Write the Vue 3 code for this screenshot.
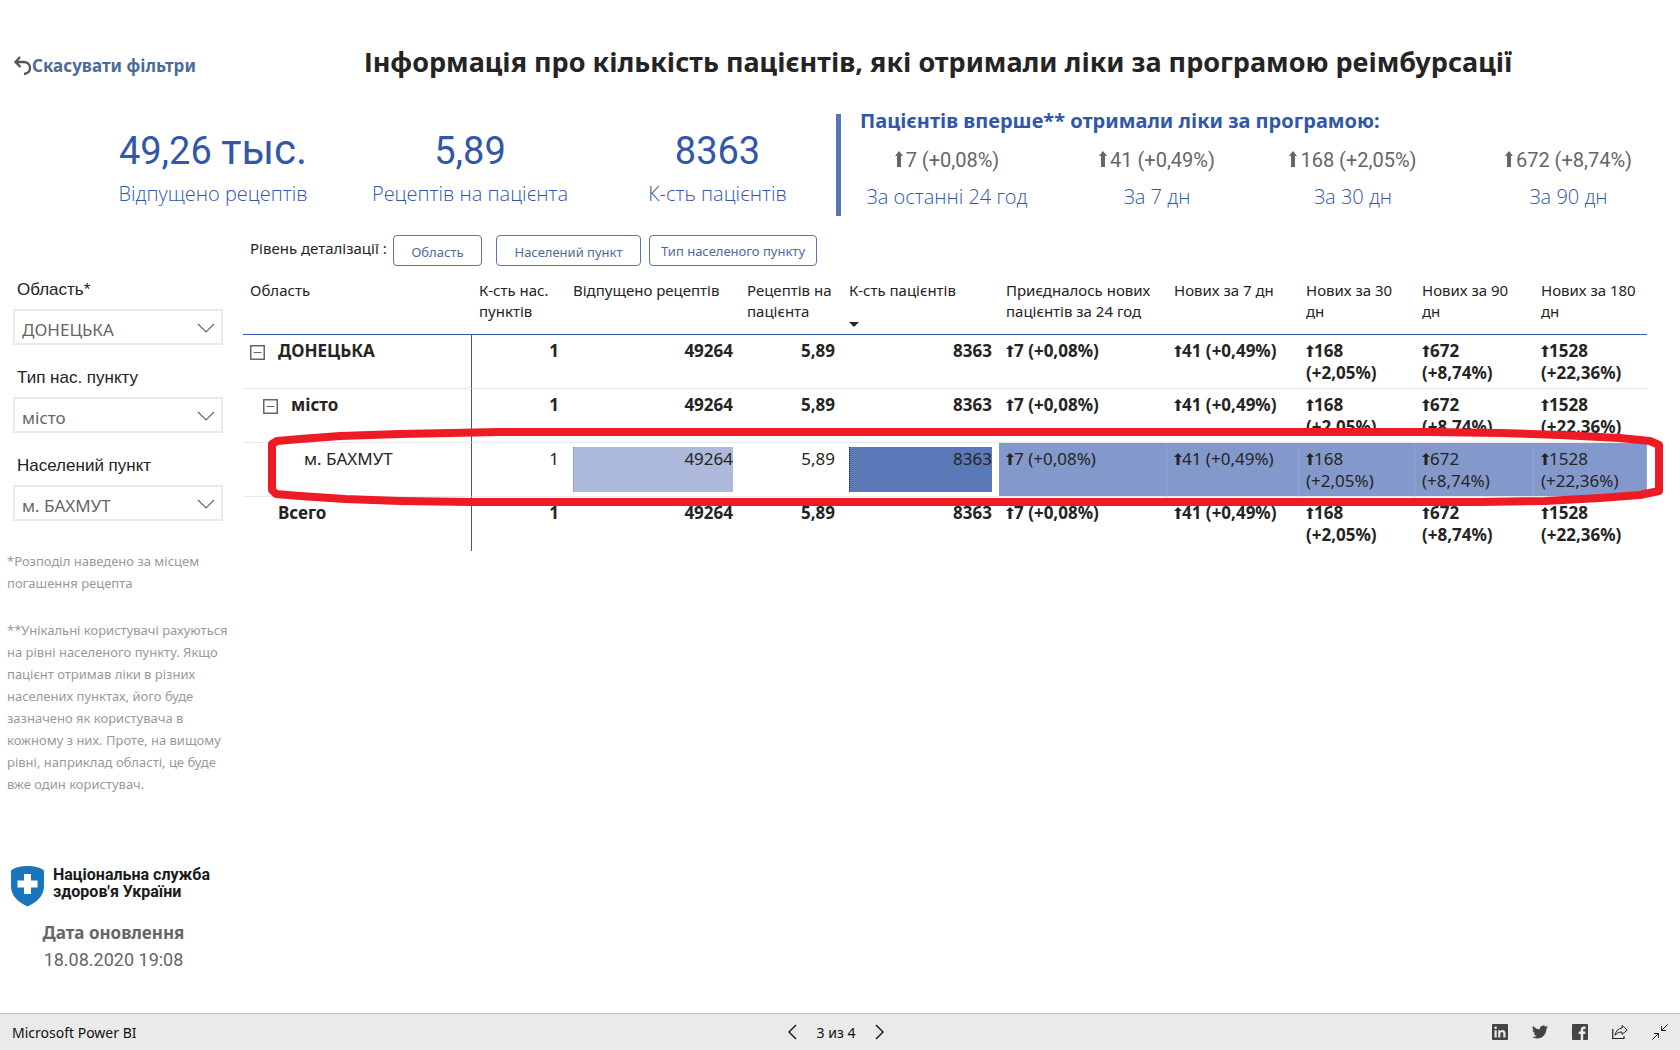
<script setup>
import { ref } from 'vue'

const totals = [
  { value: '49,26', unit: 'тыс.', label: 'Відпущено рецептів' },
  { value: '5,89', label: 'Рецептів на пацієнта' },
  { value: '8363', label: 'К-сть пацієнтів' },
]

const growth = [
  { value: '7 (+0,08%)', label: 'За останні 24 год' },
  { value: '41 (+0,49%)', label: 'За 7 дн' },
  { value: '168 (+2,05%)', label: 'За 30 дн' },
  { value: '672 (+8,74%)', label: 'За 90 дн' },
]

const filters = ref([
  { id: 'region', label: 'Область*', value: 'ДОНЕЦЬКА' },
  { id: 'kind', label: 'Тип нас. пункту', value: 'місто' },
  { id: 'place', label: 'Населений пункт', value: 'м. БАХМУТ' },
])

const columns = [
  { key: 'name', title: 'Область' },
  { key: 'places', title: 'К-сть нас. пунктів' },
  { key: 'issued', title: 'Відпущено рецептів' },
  { key: 'ratio', title: 'Рецептів на пацієнта' },
  { key: 'patients', title: 'К-сть пацієнтів', sorted: true },
  { key: 'day', title: 'Приєдналось нових пацієнтів за 24 год' },
  { key: 'week', title: 'Нових за 7 дн' },
  { key: 'month', title: 'Нових за 30 дн' },
  { key: 'quarter', title: 'Нових за 90 дн' },
  { key: 'half', title: 'Нових за 180 дн' },
]

const rows = [
  { name: 'ДОНЕЦЬКА', level: 'top', toggle: true },
  { name: 'місто', level: 'mid', toggle: true },
  { name: 'м. БАХМУТ', level: 'leaf' },
  { name: 'Всего', level: 'sum' },
]

const trends = ['7 (+0,08%)', '41 (+0,49%)', '168 (+2,05%)', '672 (+8,74%)', '1528 (+22,36%)']
</script>

<template>
  <div class="report">
    <main class="canvas">
      <header class="head">
        <button class="reset" type="button">
          <svg width="18" height="20" viewBox="0 0 18 20" aria-hidden="true">
            <path d="M6 1 1.500 6 6.500 11M2 6h7.500c4 0 6.500 2.500 6.500 6 0 3-2 5.500-6 6" fill="none" stroke="#555" stroke-width="2.300" />
          </svg>
          <span>Скасувати фільтри</span>
        </button>
        <h1>Інформація про кількість пацієнтів, які отримали ліки за програмою реімбурсації</h1>
      </header>

      <section class="kpis">
        <div class="totals">
          <div v-for="t in totals" :key="t.label">
            <div class="number">{{ t.value }} <span v-if="t.unit" class="unit">{{ t.unit }}</span></div>
            <div class="caption">{{ t.label }}</div>
          </div>
        </div>
        <div class="divider"></div>
        <div class="growth">
          <h2>Пацієнтів вперше** отримали ліки за програмою:</h2>
          <div class="growth-grid">
            <div v-for="g in growth" :key="g.label" class="growth-item">
              <div class="delta">
                <svg class="arrow-lg" width="8" height="16" viewBox="0 0 8 16" aria-hidden="true"><path d="M4 0 8 5H6V16H2V5H0z" /></svg>{{ g.value }}
              </div>
              <div class="caption">{{ g.label }}</div>
            </div>
          </div>
        </div>
      </section>

      <div class="body">
        <aside class="side">
          <div v-for="f in filters" :key="f.id" class="filter">
            <label :for="f.id">{{ f.label }}</label>
            <div class="select-box">
              <select :id="f.id" v-model="f.value">
                <option>{{ f.value }}</option>
              </select>
              <svg width="18" height="10" viewBox="0 0 18 10" aria-hidden="true"><path d="M1 1l8 8 8-8" fill="none" stroke="#666" stroke-width="1.200" /></svg>
            </div>
          </div>
          <div class="notes">
            <p>*Розподіл наведено за місцем погашення рецепта</p>
            <p>**Унікальні користувачі рахуються на рівні населеного пункту. Якщо пацієнт отримав ліки в різних населених пунктах, його буде зазначено як користувача в кожному з них. Проте, на вищому рівні, наприклад області, це буде вже один користувач.</p>
          </div>
          <div class="brand">
            <svg width="34" height="41" viewBox="0 0 34 41" aria-hidden="true">
              <path d="M17.500 0c6 0 12 1 16.500 4.500V20c0 10-7 16-16.500 20.500C8 36 1 30 1 20V4.500C5.500 1 11.500 0 17.500 0z" fill="#1a75bc" />
              <path d="M14 8h7v6.500h6.500v7H21V28h-7v-6.500H7.500v-7H14z" fill="#fff" />
            </svg>
            <div class="brand-name">Національна служба<br />здоров'я України</div>
          </div>
          <div class="updated">
            <div class="updated-label">Дата оновлення</div>
            <div class="updated-value">18.08.2020 19:08</div>
          </div>
        </aside>

        <section class="content">
          <div class="levels">
            <span class="levels-label">Рівень деталізації :</span>
            <button class="level region" type="button">Область</button>
            <button class="level place" type="button">Населений пункт</button>
            <button class="level kind" type="button">Тип населеного пункту</button>
          </div>

          <div class="matrix">
            <table>
              <colgroup>
                <col v-for="c in columns" :key="c.key" :class="'col-' + c.key" />
              </colgroup>
              <thead>
                <tr>
                  <th v-for="c in columns" :key="c.key" scope="col">
                    {{ c.title }}
                    <svg v-if="c.sorted" class="sort" width="10" height="5" viewBox="0 0 10 5" aria-hidden="true"><path d="M0 0h10L5 5z" fill="#252423" /></svg>
                  </th>
                </tr>
              </thead>
              <tbody>
                <tr v-for="r in rows" :key="r.name" :class="r.level">
                  <th scope="row">
                    <div class="row-name">
                      <button v-if="r.toggle" class="toggle" type="button" aria-label="Згорнути">
                        <svg width="15" height="15" viewBox="0 0 15 15" aria-hidden="true"><path d="M.75.75h13.500v13.500H.75z" fill="none" stroke="#666" stroke-width="1.500" /><path d="M3.500 7.500h8" stroke="#666" /></svg>
                      </button>
                      <span>{{ r.name }}</span>
                    </div>
                  </th>
                  <td class="num">1</td>
                  <td class="num"><div class="databar light">49264</div></td>
                  <td class="num">5,89</td>
                  <td class="num"><div class="databar dark">8363</div></td>
                  <td v-for="t in trends" :key="t" class="trend">
                    <svg class="arrow" width="8" height="12" viewBox="0 0 8 12" aria-hidden="true"><path d="M4 0 8 4H5.500V12H2.500V4H0z" /></svg>{{ t }}
                  </td>
                </tr>
              </tbody>
            </table>
            <svg class="marker" viewBox="268 429 1396 78" preserveAspectRatio="none" aria-hidden="true">
              <path d="M272 444V490L276 494 300 496 345 499 400 501 470 502H1480L1545 501 1600 498 1640 495 1659 491V445L1650 441 1620 438 1560 435 1500 433 1430 432H500L400 434 340 436 300 439 277 441Z" fill="none" stroke="#ed1c24" stroke-width="8" stroke-linejoin="round" vector-effect="non-scaling-stroke" />
            </svg>
          </div>
        </section>
      </div>
    </main>

    <footer class="bar">
      <a class="product" href="#">Microsoft Power BI</a>
      <nav class="pager">
        <button type="button" aria-label="Попередня"><svg width="10" height="16" viewBox="0 0 10 16"><path d="M9 1 2 8l7 7" fill="none" stroke="#222" stroke-width="1.500" /></svg></button>
        <span>3 из 4</span>
        <button type="button" aria-label="Наступна"><svg width="10" height="16" viewBox="0 0 10 16"><path d="m1 1 7 7-7 7" fill="none" stroke="#222" stroke-width="1.500" /></svg></button>
      </nav>
      <div class="share">
        <a href="#" aria-label="LinkedIn"><svg width="16" height="16" viewBox="0 0 16 16"><rect width="16" height="16" rx="1" fill="#444" /><path d="M2.500 6.200h2.200V13.500H2.500zM6.200 6.200h2.100v1c.5-.8 1.300-1.200 2.300-1.200 2 0 2.900 1.300 2.900 3.300v4.200h-2.200V9.700c0-1.100-.4-1.800-1.300-1.800-1.100 0-1.600.8-1.600 1.900v3.700H6.200z" fill="#eaeaea" /><circle cx="3.600" cy="3.800" r="1.250" fill="#eaeaea" /></svg></a>
        <a href="#" aria-label="Twitter"><svg width="16" height="16" viewBox="0 0 24 24"><path d="M23.950 4.570a10 10 0 0 1-2.820.770 4.960 4.960 0 0 0 2.160-2.720c-.950.550-2 .950-3.130 1.180a4.920 4.920 0 0 0-8.380 4.480C7.690 8.090 4.070 6.130 1.640 3.160a4.920 4.920 0 0 0 1.520 6.570 4.900 4.900 0 0 1-2.230-.610v.060a4.920 4.920 0 0 0 3.950 4.830 5 5 0 0 1-2.210.080 4.940 4.940 0 0 0 4.600 3.420A9.870 9.870 0 0 1 0 19.540a13.990 13.990 0 0 0 7.550 2.210c9.050 0 14-7.500 14-13.980 0-.210 0-.420-.020-.630a9.940 9.940 0 0 0 2.460-2.550z" fill="#444" /></svg></a>
        <a href="#" aria-label="Facebook"><svg width="16" height="16" viewBox="0 0 16 16"><rect width="16" height="16" rx="1" fill="#444" /><path d="M8.700 16V9.900H6.700V7.500h2V5.800c0-2 1.200-3.200 3.100-3.200.9 0 1.600.1 1.800.1v2.200h-1.200c-1 0-1.200.5-1.200 1.200v1.400h2.300l-.3 2.400h-2V16z" fill="#eaeaea" /></svg></a>
        <a href="#" aria-label="Поділитися"><svg width="16" height="16" viewBox="0 0 16 16"><path d="M.75 5v9.500H12V12" fill="none" stroke="#222" stroke-width="1.200" /><path d="M10 1.500 15.200 6 10 10.500V8C7 8 4.800 9 3.200 11.300 3.600 7.200 6 4.500 10 4z" fill="none" stroke="#222" stroke-linejoin="round" /></svg></a>
        <a href="#" aria-label="Згорнути на весь екран"><svg width="16" height="16" viewBox="0 0 16 16"><path d="M.5 15.500 6.500 9.500M2 9.500h4.500V14M15.500.5 9.500 6.500M9.500 2v4.500H14" fill="none" stroke="#222" /></svg></a>
      </div>
    </footer>
  </div>
</template>

<style>
body {
  margin: 0;
}
</style>

<style scoped>
.report {
  display: flex;
  flex-direction: column;
  min-height: 100vh;
  background: #fff;
  color: #252423;
  font-family: "Noto Sans", "Open Sans", sans-serif;
  font-size: 15px;
}
.canvas {
  flex: 1;
}
button {
  font-family: inherit;
  padding: 0;
  border: 0;
  background: none;
  cursor: pointer;
}
h1,
h2,
p {
  margin: 0;
}

.head {
  display: flex;
  align-items: flex-start;
  padding: 42px 47px 0 14px;
}
.reset {
  display: flex;
  align-items: center;
  width: 229px;
  margin-top: 12px;
  color: #4d6b99;
  font-size: 17px;
  font-weight: 700;
  line-height: 24px;
}
h1 {
  flex: 1;
  font-size: 27px;
  line-height: 40px;
  text-align: center;
}

.kpis {
  display: flex;
  margin-top: 25px;
  padding-left: 85px;
  color: #3257a8;
}
.totals {
  display: grid;
  grid-template-columns: 256fr 258fr 237fr;
  flex: 751;
  padding-top: 16px;
  text-align: center;
}
.number {
  font-family: Roboto, sans-serif;
  font-size: 38px;
  line-height: 56px;
  white-space: nowrap;
}
.unit {
  font-size: 42px;
  line-height: 42px;
}
.caption {
  font-family: "Open Sans", "Noto Sans", sans-serif;
  font-size: 20px;
  font-weight: 350;
  line-height: 30px;
  white-space: nowrap;
}
.divider {
  width: 5px;
  margin-top: 7px;
  background: #5874b8;
}
.growth {
  flex: 839;
  padding-bottom: 4px;
}
h2 {
  padding-left: 19px;
  font-size: 20px;
  line-height: 28px;
}
.growth-grid {
  display: grid;
  grid-template-columns: 212fr 208fr 184fr 235fr;
  padding-top: 11px;
  text-align: center;
}
.growth-item:last-child {
  padding-left: 12px;
}
.delta {
  color: #666;
  font-family: Roboto, sans-serif;
  font-size: 20px;
  line-height: 28px;
}
.arrow-lg {
  margin-right: 3px;
  fill: #666;
}
.growth .caption {
  margin-top: 8px;
}

.body {
  display: flex;
  margin-top: 19px;
}
.side {
  width: 243px;
  flex: none;
  padding-top: 45px;
  box-sizing: border-box;
}
.filter {
  height: 88px;
  padding: 0 20px 0 13px;
}
.filter label {
  display: block;
  padding-left: 4px;
  font-family: "Liberation Sans", sans-serif;
  font-size: 17px;
  line-height: 20px;
  color: #222;
}
.select-box {
  position: relative;
  margin-top: 9px;
}
.select-box select {
  width: 100%;
  height: 36px;
  padding: 4px 30px 0 7px;
  border: 2px solid #eaeaea;
  appearance: none;
  background: #fff;
  color: #666;
  font-family: inherit;
  font-size: 17px;
}
.select-box svg {
  position: absolute;
  top: 14px;
  right: 8px;
  pointer-events: none;
}
.notes {
  padding: 6px 8px 0 7px;
  color: #999;
  font-size: 13px;
  line-height: 22px;
}
.notes p + p {
  margin-top: 25px;
}
.brand {
  display: flex;
  margin-top: 71px;
  padding-left: 10px;
}
.brand-name {
  padding-left: 9px;
  color: #1a1a1a;
  font-family: Roboto, sans-serif;
  font-size: 16px;
  font-weight: 700;
  line-height: 17px;
}
.updated {
  width: 227px;
  margin-top: 12px;
  color: #666;
  text-align: center;
  line-height: 27px;
}
.updated-label {
  font-size: 17px;
  font-weight: 700;
}
.updated-value {
  font-family: Roboto, sans-serif;
  font-size: 18px;
}

.content {
  flex: 1;
  min-width: 0;
  padding-right: 33px;
}
.levels {
  display: flex;
}
.levels-label {
  width: 150px;
  padding-left: 7px;
  box-sizing: border-box;
  line-height: 27px;
  white-space: nowrap;
}
.level {
  height: 31px;
  padding-top: 3px;
  border: 1px solid #5874b8;
  border-radius: 4px;
  color: #4d6b99;
  font-size: 13px;
  white-space: nowrap;
}
.region {
  width: 89px;
  margin-right: 14px;
}
.place {
  width: 145px;
  margin-right: 8px;
}
.kind {
  width: 168px;
  padding-top: 0;
}

.matrix {
  position: relative;
  margin-top: 14px;
}
table {
  width: 100%;
  table-layout: fixed;
  border-spacing: 0;
}
.col-name { width: 229px; }
.col-places { width: 94px; }
.col-issued { width: 174px; }
.col-ratio { width: 102px; }
.col-patients { width: 157px; }
.col-day { width: 168px; }
.col-week { width: 132px; }
.col-month { width: 116px; }
.col-quarter { width: 119px; }
.col-half { width: 113px; }

th,
td {
  box-sizing: border-box;
  padding: 5px 7px 0 7px;
  text-align: left;
  vertical-align: top;
  font-size: 17px;
  line-height: 22px;
}
thead th {
  height: 55px;
  padding-top: 0;
  padding-right: 4px;
  border-bottom: 1px solid #3257a8;
  font-size: 15px;
  font-weight: 400;
  line-height: 21px;
}
.sort {
  display: block;
  margin-top: 21px;
}
tbody th,
tbody td {
  height: 54px;
  border-bottom: 1px solid #eaeaea;
  font-weight: 700;
}
tbody th {
  border-right: 1px solid #3257a8;
}
.num {
  text-align: right;
}
tbody .trend {
  padding-right: 2px;
}
.row-name {
  display: flex;
  align-items: flex-start;
}
.toggle {
  width: 15px;
  height: 15px;
  margin: 5px 13px 0 0;
  line-height: 0;
}
.mid .row-name {
  padding-left: 13px;
}
.leaf .row-name {
  padding-left: 54px;
}
.sum .row-name {
  padding-left: 28px;
}
tbody .leaf th,
tbody .leaf td {
  font-weight: 400;
}
tbody .sum th,
tbody .sum td {
  border-bottom: 0;
}
.leaf .databar {
  height: 45px;
  margin-top: -1px;
  line-height: 24px;
}
.leaf .light {
  background: #adbadc;
  border-left: 1px dotted #888;
}
.leaf .dark {
  background: #5b78b9;
  border-left: 1px dotted #222;
}
tbody .leaf .trend {
  padding-right: 7px;
  background: #8499cb;
  border-right: 1px solid #90a3d0;
}
.arrow {
  fill: #252423;
}
.marker {
  position: absolute;
  top: 149px;
  left: 25px;
  width: calc(100% - 8px);
  height: 78px;
  overflow: visible;
  pointer-events: none;
}

.bar {
  display: grid;
  grid-template-columns: 1fr auto 1fr;
  align-items: center;
  height: 36px;
  padding: 0 12px;
  border-top: 1px solid #c0c0c0;
  background: #eaeaea;
  color: #111;
  font-size: 14px;
}
.product {
  color: inherit;
  text-decoration: none;
}
.pager {
  display: flex;
  align-items: center;
  gap: 20px;
  margin-right: 8px;
}
.pager button,
.share a {
  display: flex;
}
.share {
  display: flex;
  justify-content: flex-end;
  gap: 24px;
}
</style>
